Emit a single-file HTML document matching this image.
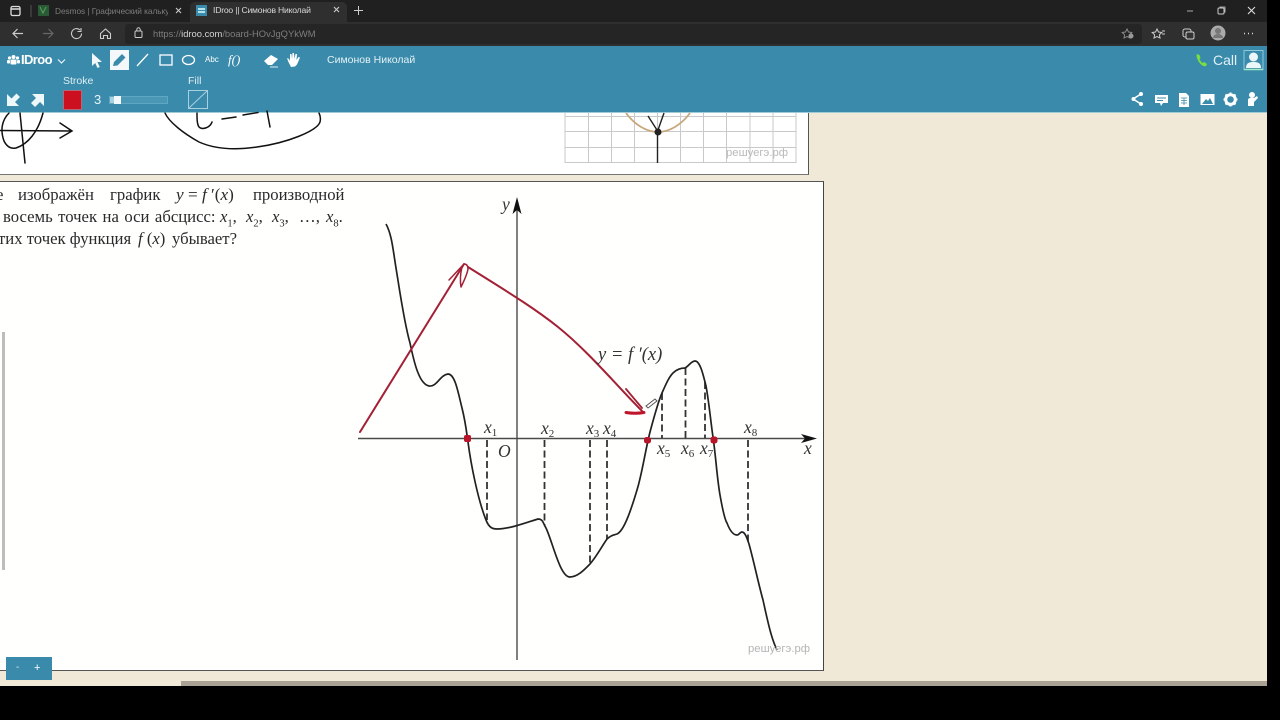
<!DOCTYPE html>
<html><head><meta charset="utf-8"><style>
html,body{margin:0;padding:0;width:1280px;height:720px;overflow:hidden;background:#000}
#r{position:relative;width:1280px;height:720px;overflow:hidden;background:#000}
.a{position:absolute}
.t{position:absolute;white-space:nowrap;font-family:"Liberation Sans","Noto Sans CJK SC",sans-serif}
.s{position:absolute;white-space:pre;font-family:"Liberation Serif","Noto Serif CJK SC",serif;font-size:16.7px;color:#2a2a2a;line-height:18px}
.i{font-style:italic}
.s sub{font-size:10.5px;line-height:0}
svg{position:absolute;left:0;top:0}
</style></head><body><div id="r">
<div class="a" style="left:0;top:0;width:1267px;height:686px;background:#f0e9d8"></div>
<div class="a" style="left:0;top:0;width:1267px;height:22px;background:#202020"></div>
<div class="a" style="left:190px;top:2px;width:157px;height:20px;background:#2f2f2f;border-radius:5px 5px 0 0"></div>
<div class="a" style="left:0;top:22px;width:1267px;height:24px;background:#2f2f2f"></div>
<div class="a" style="left:125px;top:24px;width:1017px;height:20px;background:#252525;border-radius:3px"></div>
<div class="a" style="left:0;top:46px;width:1267px;height:67px;background:#3a8bab"></div>
<div class="a" style="left:0;top:112px;width:1267px;height:1px;background:#9fcbd6"></div>
<div class="t" style="left:55px;top:5px;font-size:8.3px;line-height:12px;color:#7d7d7d;width:113px;overflow:hidden;letter-spacing:-.05px">Desmos | Графический калькул</div>
<div class="t" style="left:213px;top:4px;font-size:8.6px;line-height:13px;color:#d8d8d8;letter-spacing:-.2px">IDroo || Симонов Николай</div>
<div class="t" style="left:153px;top:27px;font-size:9.4px;line-height:13px;color:#7e7e7e">https://<span style="color:#d5d5d5">idroo.com</span>/board-HOvJgQYkWM</div>
<div class="t" style="left:21px;top:52px;font-size:13px;line-height:16px;font-weight:bold;color:#fff;letter-spacing:-.6px">IDroo</div>
<div class="t" style="left:205px;top:55px;font-size:8px;line-height:10px;color:#fff">Abc</div>
<div class="t" style="left:228px;top:52px;font-size:13px;line-height:16px;color:#fff;font-style:italic;font-family:'Liberation Serif',serif">f()</div>
<div class="t" style="left:327px;top:54px;font-size:10.5px;line-height:13px;color:#e4f0f5">Симонов Николай</div>
<div class="t" style="left:63px;top:75px;font-size:10.5px;line-height:12px;color:#e0edf2">Stroke</div>
<div class="t" style="left:188px;top:75px;font-size:10.5px;line-height:12px;color:#e0edf2">Fill</div>
<div class="t" style="left:94px;top:92px;font-size:13px;line-height:15px;color:#e8f3f7">3</div>
<div class="t" style="left:1213px;top:52px;font-size:14px;line-height:16px;color:#dff1f7">Call</div>
<div class="a" style="left:63px;top:90px;width:19px;height:20px;background:#cc1020;border:1px solid #b06a78;box-sizing:border-box"></div>
<div class="a" style="left:109px;top:96px;width:59px;height:8px;background:#4a97b5;border:1px solid #5ea6c1;box-sizing:border-box"></div>
<div class="a" style="left:110px;top:97px;width:4px;height:6px;background:#a9d2e0"></div>
<div class="a" style="left:114px;top:96px;width:7px;height:8px;background:#f2f9fb"></div>
<div class="a" style="left:110px;top:50px;width:19px;height:20px;background:#f4f8fa"></div>
<div class="a" style="left:0;top:113px;width:808px;height:61px;background:#fff;border-right:1px solid #555;border-bottom:1px solid #777"></div>
<div class="a" style="left:0;top:181px;width:824px;height:490px;background:#fffffe;border-top:1px solid #555;border-right:1px solid #444;border-bottom:1px solid #555;box-sizing:border-box"></div>
<div class="a" style="left:2px;top:332px;width:3px;height:238px;background:#bdbdbd"></div>
<div class="a" style="left:6px;top:657px;width:46px;height:23px;background:#3a8bab"></div>
<div class="t" style="left:16px;top:662px;font-size:10px;line-height:12px;color:#cfe3eb">-</div>
<div class="t" style="left:34px;top:662px;font-size:11px;line-height:12px;color:#fff">+</div>
<div class="a" style="left:181px;top:681px;width:1086px;height:5px;background:#aaa294"></div>
<svg width="1280" height="720" viewBox="0 0 1280 720" fill="none">
<!-- chrome icons -->
<rect x="11" y="6.500" width="9" height="9" rx="1.500" stroke="#ddd" stroke-width="1.300"/><path d="M11 9h9" stroke="#ddd" stroke-width="1.500"/>
<path d="M31 5v12" stroke="#555"/>
<rect x="38" y="5" width="11" height="11" fill="#2a5a35"/><path d="M40 7l3 6 3-6" stroke="#56a05f"/>
<path d="M176 8l5 5M181 8l-5 5M334 7l5 5M339 7l-5 5" stroke="#ccc" stroke-width="1.100"/>
<rect x="196" y="5" width="11" height="11" fill="#3a8bab"/><path d="M198 9h7M198 12h7" stroke="#dff" stroke-width="1.500"/>
<path d="M354 10.500h9M358.500 6v9" stroke="#ccc"/>
<path d="M1187 11h6" stroke="#aaa"/><rect x="1218" y="8" width="6" height="6" rx="1" stroke="#ccc"/><path d="M1220 8v-1h5v5h-1" stroke="#ccc" stroke-width=".8"/><path d="M1248 7l7 7M1255 7l-7 7" stroke="#ddd" stroke-width="1.100"/>
<path d="M23 33.500H13M17.500 29l-4.500 4.500 4.500 4.500" stroke="#ccc" stroke-width="1.200"/>
<path d="M43 33.500h10M48.500 29l4.500 4.500-4.500 4.500" stroke="#666" stroke-width="1.200"/>
<path d="M80 30a5 5 0 1 0 1.500 3.500M81 28v3.500h-3.500" stroke="#ccc" stroke-width="1.100"/>
<path d="M100.500 33.500l5-4.500 5 4.500v5h-3v-3h-4v3h-3z" stroke="#ccc" stroke-width="1.100"/>
<rect x="135" y="31" width="7" height="6.500" rx="1" stroke="#ccc"/><path d="M136.800 31v-1.500a1.700 1.700 0 0 1 3.400 0V31" stroke="#ccc"/>
<path d="M1127 29l1.500 3 3.300.5-2.400 2.300.6 3.200-3-1.500-3 1.500.6-3.200-2.400-2.300 3.300-.5z" stroke="#888"/><circle cx="1131" cy="36" r="2.500" fill="#999"/>
<path d="M1157 29l1.500 3 3.300.5-2.400 2.300.6 3.200-3-1.500-3 1.500.6-3.200-2.400-2.300 3.300-.5z" stroke="#ccc"/><path d="M1162 31h3M1162 34h3" stroke="#ccc"/>
<rect x="1183" y="29" width="8" height="8" rx="2" stroke="#ccc"/><rect x="1186" y="32" width="8" height="7" rx="1.500" fill="#333" stroke="#ccc"/>
<circle cx="1218" cy="33" r="7.500" fill="#aaa"/><circle cx="1218" cy="31" r="3" fill="#777"/><path d="M1213 38a5 4 0 0 1 10 0z" fill="#777"/>
<path d="M1244 33.500h1M1248 33.500h1M1252 33.500h1" stroke="#ddd" stroke-width="1.500"/>
<!-- logo -->
<g fill="#fff"><circle cx="13.500" cy="57" r="2"/><circle cx="9.500" cy="58" r="1.600"/><circle cx="17.500" cy="58" r="1.600"/><rect x="10.500" y="59.500" width="6" height="5" rx="1"/><rect x="7" y="60" width="3" height="3.500" rx="1"/><rect x="17" y="60" width="3" height="3.500" rx="1"/></g>
<path d="M58 59.500l3.500 3.500 3.500-3.500" stroke="#e8f3f7" stroke-width="1.200"/>
<path d="M92 53v13l3.200-3 2.300 5 2.200-1-2.300-5h4.600z" fill="#f2f8fa"/>
<path d="M113 66l1-4 8-8 3.500 3.500-8 8z" fill="#3a8bab"/>
<path d="M137 66l11-12" stroke="#fff" stroke-width="1.300"/>
<rect x="160" y="55" width="12" height="10" stroke="#fff" stroke-width="1.300"/>
<ellipse cx="188.500" cy="60" rx="6" ry="4.500" stroke="#fff" stroke-width="1.300"/>
<path d="M264 61l7-6 7 4-6 6h-4z" fill="#fff"/><path d="M270 67h8" stroke="#dfeef3"/>
<path d="M291 67l-3-6-1-3 2 1 1 2 0-7h1.500l.5 5 .5-6h1.500l.5 6 1-5h1.500l-.5 6 2-3 1.500.5-3 7-2 2z" fill="#fff"/>
<path d="M7 94v12h12l-4-4 5-5-3.500-3.500-5 5z" fill="#eef7fa"/>
<path d="M44 94v12l-4-4-5 5-4-4 5-5-4-4z" fill="#eef7fa"/>
<rect x="188.500" y="90.500" width="19" height="18" stroke="#a8d0de"/><path d="M189 108l18-17" stroke="#a8d0de"/>
<!-- top right -->
<path d="M1197 54c-1 2 0 5 2 8s5 5 7 4l1-2-3-2-1.500 1c-1-.5-2.500-2.500-3-4l1-1-1-3z" fill="#7be03d"/>
<rect x="1244" y="50.500" width="19" height="19" stroke="#8cc8da"/><circle cx="1253.500" cy="57" r="4.500" fill="#eaf6f8"/><path d="M1246 68c0-5 3-6 7.500-6s7.500 1 7.500 6z" fill="#eaf6f8"/><path d="M1244 69.500h19" stroke="#9fe8c8" stroke-width="1.500"/>
<path d="M1141 94l-8 5 8 5" stroke="#fff" stroke-width="1.500"/><circle cx="1141" cy="94" r="2" fill="#fff"/><circle cx="1133.500" cy="99" r="2" fill="#fff"/><circle cx="1141" cy="104" r="2" fill="#fff"/>
<path d="M1155 95h13v8h-5l-2 3-1-3h-5z" fill="#fff"/><path d="M1157 98h9M1157 100.500h6" stroke="#3a8bab"/>
<path d="M1179 93h7l3 3v11h-10z" fill="#fff"/><path d="M1181 98h6M1181 100.500h6M1181 103h6M1184 98v7" stroke="#3a8bab" stroke-width=".8"/>
<rect x="1200.500" y="94" width="14" height="11" fill="#fff"/><path d="M1202 104l4-5 2 2 2-3 3 6z" fill="#3a8bab"/>
<circle cx="1230.500" cy="99.500" r="4.800" stroke="#fff" stroke-width="3"/><path d="M1230.500 92.500v2.500M1230.500 104v2.500M1223.500 99.500h2.500M1235 99.500h2.500M1225.500 94.500l1.800 1.800M1233.700 102.700l1.800 1.800M1235.500 94.500l-1.800 1.800M1227.300 102.700l-1.800 1.800" stroke="#fff" stroke-width="2"/>
<circle cx="1252" cy="95" r="3" fill="#fff"/><path d="M1248 106v-6c0-2 2-2 4-2h2l3-2 1 2-4 4v4z" fill="#fff"/>
<!-- top sketches -->
<g stroke="#111" stroke-width="1.500" stroke-linecap="round">
<path d="M9 113C2 120 0 130 4 141c3 6 7 8 12 7 12-4 22-16 27-35"/>
<path d="M20 113l5 50M0 130.500l72 .5M60 123l12 8-12 7"/>
<path d="M165 113c4 9 18 20 34 29 18 8 38 8 58 5 30-4 60-16 63-25 1-4 0-7-1-9"/>
<path d="M197 113c0 6 0 11 2 14 3 3 11 1 13-5M222 119l14-2M243 115l15-2.500M267 111l3 16"/>
</g>
<!-- grid -->
<g stroke="#c9c9c9" stroke-width="1">
<path d="M565 116.500h231M565 131.500h231M565 147.500h231M565 162.500h231"/>
<path d="M565 113v50M588.500 113v50M611.500 113v50M634.500 113v50M657.500 113v50M680.500 113v50M703.500 113v50M726.500 113v50M750 113v50M773 113v50M796 113v50"/>
</g>
<path d="M626 113c8 11 20 19 32 19s24-8 32-19" stroke="#c9a77e" stroke-width="1.800"/>
<path d="M657.500 131v32M648 116l9 14M664 113l-6 17" stroke="#222" stroke-width="1.400"/><circle cx="658" cy="132" r="3.500" fill="#222"/>
<text x="726" y="156" font-family="Liberation Sans,sans-serif" font-size="11.300" fill="#b9b9b9">решуегэ.рф</text>
<!-- axes -->
<path d="M358 438.500h450M517 206v454" stroke="#4a4a4a" stroke-width="1.400"/>
<path d="M817 438.500l-16-4.500 4 4.500-4 4.500z" fill="#111"/>
<path d="M517 197l-4.500 17 4.500-4 4.500 4z" fill="#111"/>
<g stroke="#333" stroke-width="1.800" stroke-dasharray="7 3.500">
<path d="M487 440v80M544.500 440v85M590 440v124M607 440v99M748 440v102M662 393v45M685.500 368v70M705 382v56"/>
</g>
<path d="M386 224C392 235 393 250 396 268S404 322 410 343C414 362 419 384 429 386C437 387 440 375 448 374C455 374 458 392 462 408S467 436 468 442C471 465 478 500 486 520C489 528 493 529 497 529C510 529 528 522 538 519C543 519 543 523 546 528C553 543 560 577 570 577C578 577 585 569 590 564C597 556 602 546 607 539C611 535 614 535 617 534C624 531 631 510 637 490C642 474 645 452 650 432C654 417 658 402 662 393C666 384 669 377 673 373C677 369 681 368 685 368C689 366 691 361 695 361C700 361 703 374 706 386C709 402 711 424 713 437C716 458 717 478 720 495C723 512 725 520 727 523C730 531 733 535 737 535C739 535 740 532 742 532C745 532 747 538 749 544C754 562 758 582 763 600C767 618 771 638 777 650" stroke="#222" stroke-width="1.700"/>
<!-- red -->
<g stroke="#a32035" stroke-width="2" stroke-linecap="round" stroke-linejoin="round">
<path d="M360 432L464 264"/>
<path d="M449 280l15-16c3 0 4 2 4 5-1 6-4 12-7 18-1-6-1-12 1-20" stroke-width="1.500"/>
<path d="M468 267c35 22 65 40 90 60 30 24 60 60 85 85"/>
<path d="M626 389l16 19" stroke-width="1.800"/><path d="M626 412.500c6 1 12 1 18 0" stroke="#c0142a" stroke-width="3"/>
</g>
<rect x="464" y="435" width="7" height="7" rx="2" fill="#b8152a"/><rect x="644" y="437" width="7" height="6.500" rx="2.500" fill="#b8152a"/><rect x="710.500" y="436.500" width="7" height="7" rx="2.500" fill="#b8152a"/>
<path d="M646 406l9-7 2 2-9 7z" fill="#fff" stroke="#555" stroke-width="1"/>
<!-- labels -->
<g font-family="Liberation Serif,serif" font-size="17.500" font-style="italic" fill="#333">
<text x="502" y="210">y</text>
<text x="804" y="454">x</text>
<text x="498" y="457">O</text>
<text x="598" y="360" font-size="18.500">y = f ′(x)</text>
<text x="484" y="433">x<tspan font-size="11" dy="3" font-style="normal">1</tspan></text>
<text x="541" y="434">x<tspan font-size="11" dy="3" font-style="normal">2</tspan></text>
<text x="586" y="434">x<tspan font-size="11" dy="3" font-style="normal">3</tspan></text>
<text x="603" y="434">x<tspan font-size="11" dy="3" font-style="normal">4</tspan></text>
<text x="657" y="454">x<tspan font-size="11" dy="3" font-style="normal">5</tspan></text>
<text x="681" y="454">x<tspan font-size="11" dy="3" font-style="normal">6</tspan></text>
<text x="700" y="454">x<tspan font-size="11" dy="3" font-style="normal">7</tspan></text>
<text x="744" y="433">x<tspan font-size="11" dy="3" font-style="normal">8</tspan></text>
</g>
<text x="748" y="652" font-family="Liberation Sans,sans-serif" font-size="11.300" fill="#b5b5b5">решуегэ.рф</text>
</svg>
<div class="s" style="left:-4px;top:186px">е</div>
<div class="s" style="left:18px;top:186px">изображён</div>
<div class="s" style="left:110px;top:186px">график</div>
<div class="s" style="left:176px;top:186px;font-size:17.2px"><span class="i">y</span> = <span class="i">f</span> ′(<span class="i">x</span>)</div>
<div class="s" style="left:253px;top:186px">производной</div>
<div class="s" style="left:3px;top:208px;word-spacing:1.300px">восемь точек на оси абсцисс:</div>
<div class="s i" style="left:220px;top:208px">x<sub style="font-style:normal">1</sub><span style="font-style:normal">,</span></div>
<div class="s i" style="left:246px;top:208px">x<sub style="font-style:normal">2</sub><span style="font-style:normal">,</span></div>
<div class="s i" style="left:272px;top:208px">x<sub style="font-style:normal">3</sub><span style="font-style:normal">,</span></div>
<div class="s" style="left:299px;top:208px">…,</div>
<div class="s i" style="left:326px;top:208px">x<sub style="font-style:normal">8</sub><span style="font-style:normal">.</span></div>
<div class="s" style="left:-2px;top:230px">тих точек функция</div>
<div class="s" style="left:138px;top:230px"><span class="i">f</span> (<span class="i">x</span>)</div>
<div class="s" style="left:172px;top:230px">убывает?</div>
</div></body></html>
